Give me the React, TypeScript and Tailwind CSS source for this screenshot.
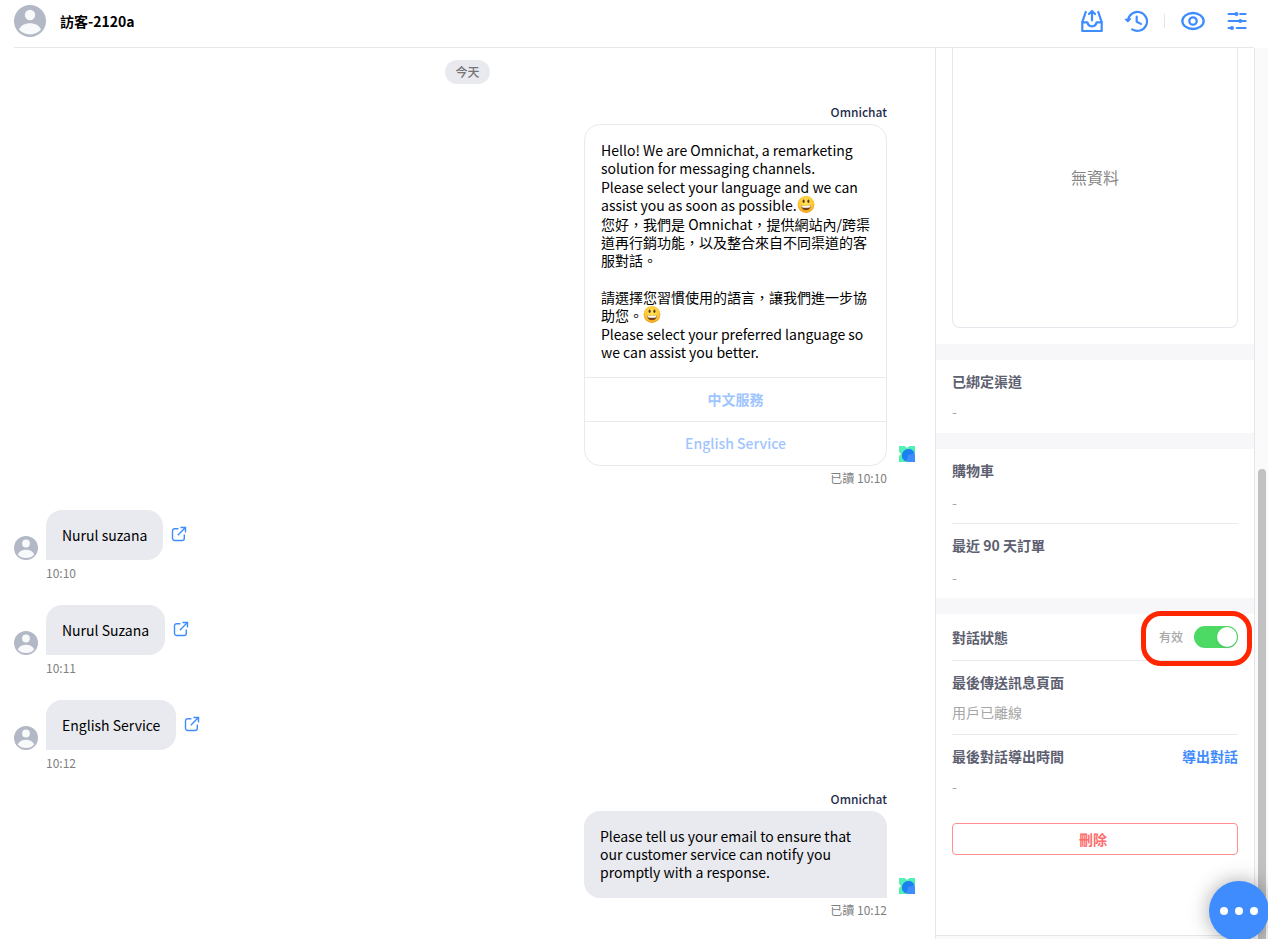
import { useState, type ReactNode } from "react";

function Avatar({ className }: { className: string }) {
  return (
    <svg viewBox="0 0 32 32" className={className} role="img" aria-label="訪客">
      <circle cx="16" cy="16" r="16" fill="#b2b8c5" />
      <circle cx="16" cy="10" r="5.2" fill="#f8f9fb" />
      <path d="M5 24.6C6.600 20.400 10.800 18.200 16 18.200s9.400 2.200 11 6.400C24.500 27.600 20.600 29.400 16 29.400S7.500 27.600 5 24.600z" fill="#f8f9fb" />
    </svg>
  );
}

function TrayIcon() {
  return (
    <svg viewBox="0 0 24 24" className="size-6" fill="none" stroke="#3f8cfe" strokeWidth="2.200" strokeLinecap="round" strokeLinejoin="round">
      <path d="M5.700 3 2.300 13.200V22h19.400v-8.800L18.300 3" />
      <path d="M2.500 13.300h4.900c.5 2.600 2.200 4 4.600 4s4.100-1.400 4.600-4h4.900" />
      <path d="M12 11.300V2.200M8.900 5 12 2l3.100 3" />
    </svg>
  );
}

function HistoryIcon() {
  return (
    <svg viewBox="0 0 24 24" className="size-6" fill="none" stroke="#3f8cfe" strokeWidth="2.200" strokeLinecap="round" strokeLinejoin="round">
      <path d="M4 11.500A9.500 9.500 0 1 1 8.200 20.300" />
      <path d="M1.300 10.300 4 12.700l2.600-2.900z" fill="#3f8cfe" strokeWidth="1.200" />
      <path d="M12.700 7.700v5l4.200 2.200" />
    </svg>
  );
}

function EyeIcon() {
  return (
    <svg viewBox="0 0 24 24" className="size-6" fill="none" stroke="#3f8cfe" strokeWidth="2.300">
      <path d="M12 4C6.400 4 1.300 7.600 1.300 12S6.400 20 12 20s10.700-3.600 10.700-8S17.600 4 12 4z" />
      <circle cx="12" cy="12" r="3.700" />
    </svg>
  );
}

function SlidersIcon() {
  return (
    <svg viewBox="0 0 24 24" className="size-6" fill="none" stroke="#3f8cfe" strokeWidth="2.200" strokeLinecap="round">
      <path d="M3.600 5h6.800M15.200 5h5.400M3.600 12h10.500M16 12h4.600M11.800 19h8.800M3.600 19h3" />
      <g fill="#3f8cfe" stroke="none">
        <circle cx="11.400" cy="5" r="2.100" />
        <circle cx="15.300" cy="12" r="2.100" />
        <circle cx="6.900" cy="19" r="2.100" />
      </g>
    </svg>
  );
}

function OpenIcon() {
  return (
    <svg viewBox="0 0 16 16" className="size-4" fill="none" stroke="#3f8cfe" strokeWidth="1.400">
      <path d="M7.400 2.700H3.700a2.200 2.200 0 0 0-2.200 2.200v7.400a2.200 2.200 0 0 0 2.200 2.200h7.400a2.200 2.200 0 0 0 2.200-2.200V8.600" />
      <path d="M6.800 9.200 14.200 1.800M9.400 1.500h5.100v5.100" />
    </svg>
  );
}

function BotMark() {
  return (
    <svg viewBox="0 0 16 16" className="size-4 shrink-0" role="img" aria-label="Omnichat">
      <path d="M0 0h4.500C6.500 0 7.500 1 8 2.500 8.500 1 9.500 0 11.500 0H16v16H0v-4.500C0 9.500 1 8.500 2.500 8 1 7.500 0 6.500 0 4.500z" fill="#52f0b5" />
      <path d="M9.500 3A6.500 6.500 0 1 0 9.500 16H16V9.500A6.500 6.500 0 0 0 9.500 3z" fill="#3f8cfe" />
      <path d="M3.200 8A6.500 6.500 0 0 1 15 6.200C13.500 8.500 11.500 8.300 9.500 8.500 8.800 10.500 9 12 6.500 15.200A6.500 6.500 0 0 1 3.200 8z" fill="#1a82f0" />
    </svg>
  );
}

function Smiley() {
  return (
    <svg viewBox="0 0 18 18" className="inline-block h-[18px] w-[18px] align-top" role="img" aria-label="😃">
      <defs>
        <radialGradient id="face" cx="50%" cy="40%" r="60%">
          <stop offset="0" stopColor="#ffe65c" />
          <stop offset="0.700" stopColor="#fdc733" />
          <stop offset="1" stopColor="#f09a1c" />
        </radialGradient>
      </defs>
      <circle cx="9" cy="8.500" r="8.400" fill="url(#face)" />
      <ellipse cx="6.600" cy="5.300" rx="1" ry="1.700" fill="#5b3411" />
      <ellipse cx="11.400" cy="5.300" rx="1" ry="1.700" fill="#5b3411" />
      <path d="M3.900 9.200c3.300.9 6.900.9 10.200 0-.2 3-2.200 5-5.100 5s-4.900-2-5.100-5z" fill="#7a4315" />
      <path d="M4.300 9.300c3.100.8 6.300.8 9.400 0l-.5 1.900c-2.700.7-5.700.7-8.400 0z" fill="#fff" />
    </svg>
  );
}

function IconButton({ label, children }: { label: string; children: ReactNode }) {
  return (
    <button type="button" aria-label={label} className="flex size-6 items-center justify-center">
      {children}
    </button>
  );
}

function VisitorMessage({ text, time }: { text: string; time: string }) {
  return (
    <article className="grid grid-cols-[24px_auto] justify-start gap-x-2 pt-1 pl-3.5">
      <Avatar className="size-6 self-end" />
      <div className="flex items-center gap-2">
        <p className="rounded-2xl rounded-bl-none bg-[#e9eaef] px-4 py-4">{text}</p>
        <a href="#open" aria-label="開啟頁面" className="pb-0.5">
          <OpenIcon />
        </a>
      </div>
      <time className="col-start-2 mt-[5px] text-xs text-[#808080]">{time}</time>
    </article>
  );
}

function BotMessage({ time, children }: { time: string; children: ReactNode }) {
  return (
    <article className="grid grid-cols-[303px_16px] justify-end gap-x-3 pr-5">
      <h2 className="mb-1 text-right text-xs font-medium text-[#1f2d4d]">Omnichat</h2>
      <div className="col-start-1">{children}</div>
      <div className="flex items-end pb-1">
        <BotMark />
      </div>
      <p className="mt-1 text-right text-xs text-[#808080]">
        已讀 <time>{time}</time>
      </p>
    </article>
  );
}

function Field({ title, action, roomy, children }: { title: string; action?: ReactNode; roomy?: boolean; children: ReactNode }) {
  return (
    <div className={roomy ? "pt-[11px] pb-[11px]" : "pt-[11px] pb-3"}>
      <div className="flex items-center justify-between">
        <h3 className="font-bold text-[#5d6070]">{title}</h3>
        {action}
      </div>
      <div className={roomy ? "mt-3 text-[#a6a6a6]" : "mt-2.5 text-[#a6a6a6]"}>{children}</div>
    </div>
  );
}

function Header() {
  return (
    <header className="mr-3.5 ml-3.5 flex h-12 shrink-0 items-center border-b border-[#e8e8ea] pb-[5px]">
      <Avatar className="size-8" />
      <h1 className="ml-3.5 text-sm font-bold">訪客-2120a</h1>
      <nav className="mr-[5px] ml-auto flex items-center gap-5">
        <IconButton label="移出對話">
          <TrayIcon />
        </IconButton>
        <IconButton label="歷史紀錄">
          <HistoryIcon />
        </IconButton>
        <div className="-mx-1 h-3.5 w-px bg-[#e4e5ea]" />
        <IconButton label="檢視">
          <EyeIcon />
        </IconButton>
        <IconButton label="設定">
          <SlidersIcon />
        </IconButton>
      </nav>
    </header>
  );
}

function Chat() {
  return (
    <main className="flex min-w-0 flex-1 flex-col gap-5 overflow-hidden pt-3 leading-[18px]">
      <p className="h-6 self-center rounded-full bg-[#e9eaef] px-2.5 text-xs leading-6 font-medium text-[#757575]">今天</p>
      <BotMessage time="10:10">
        <div className="overflow-hidden rounded-2xl border border-[#e9eaef]">
          <div className="flex flex-col gap-px p-4">
            <p>Hello! We are Omnichat, a remarketing solution for messaging channels.</p>
            <p>
              Please select your language and we can assist you as soon as possible.
              <Smiley />
            </p>
            <p>您好，我們是 Omnichat，提供網站內/跨渠道再行銷功能，以及整合來自不同渠道的客服對話。</p>
            <p className="mt-[18px]">
              請選擇您習慣使用的語言，讓我們進一步協助您。
              <Smiley />
            </p>
            <p>Please select your preferred language so we can assist you better.</p>
          </div>
          <button type="button" className="block h-11 w-full border-t border-[#e9eaef] pb-0.5 font-bold text-[#9fc5ff]">
            中文服務
          </button>
          <button type="button" className="block h-11 w-full border-t border-[#e9eaef] pb-0.5 font-medium text-[#9fc5ff]">
            English Service
          </button>
        </div>
      </BotMessage>
      <VisitorMessage text="Nurul suzana" time="10:10" />
      <VisitorMessage text="Nurul Suzana" time="10:11" />
      <VisitorMessage text="English Service" time="10:12" />
      <BotMessage time="10:12">
        <p className="rounded-2xl rounded-br-none bg-[#e9eaef] px-4 pt-4 pb-[17px]">
          Please tell us your email to ensure that our customer service can notify you promptly with a response.
        </p>
      </BotMessage>
    </main>
  );
}

function Details() {
  const [active, setActive] = useState(true);
  return (
    <aside className="flex w-[320px] shrink-0 flex-col border-x border-[#e6e6e9] leading-5">
      <div className="flex-1 overflow-hidden border-b border-[#e6e6e9]">
        <section className="px-4 pb-4">
          <div className="flex h-[280px] items-center justify-center rounded-b-lg border border-t-0 border-[#e6e6ec] pb-[22px] text-base text-[#858585]">
            無資料
          </div>
        </section>
        <section className="border-t-16 border-[#f7f7fa] px-4">
          <Field title="已綁定渠道">-</Field>
        </section>
        <section className="divide-y divide-[#e9eaef] border-t-16 border-t-[#f7f7fa] px-4">
          <Field title="購物車" roomy>
            -
          </Field>
          <Field title="最近 90 天訂單" roomy>
            -
          </Field>
        </section>
        <section className="border-t-16 border-[#f7f7fa] px-4">
          <div className="relative flex h-[47px] items-center justify-between border-b border-[#e9eaef]">
            <h3 className="font-bold text-[#5d6070]">對話狀態</h3>
            <label className="flex items-center gap-[11px] text-xs font-medium text-[#a6a6a6]">
              {active ? "有效" : "無效"}
              <input
                type="checkbox"
                role="switch"
                checked={active}
                onChange={(e) => setActive(e.target.checked)}
                className="h-[22px] w-11 appearance-none rounded-full bg-[#c4c4c4] p-px before:block before:size-5 before:rounded-full before:bg-white before:shadow checked:bg-[#4cd964] checked:before:ml-auto"
              />
            </label>
            <div className="pointer-events-none absolute -top-[3px] -right-3.5 h-[55px] w-[111px] rounded-[20px] border-5 border-[#ff2600]" />
          </div>
          <div className="divide-y divide-[#e9eaef]">
            <Field title="最後傳送訊息頁面">用戶已離線</Field>
            <Field
              title="最後對話導出時間"
              action={
                <a href="#export" className="font-bold text-[#3f8cfe]">
                  導出對話
                </a>
              }
            >
              -
            </Field>
          </div>
          <button type="button" className="mt-[15px] h-8 w-full rounded border border-[#ff8f8f] pr-1 font-bold text-[#ff6b6b]">
            刪除
          </button>
        </section>
      </div>
      <div className="h-[3px] bg-[#fafafa]" />
    </aside>
  );
}

export default function App() {
  return (
    <div className="relative flex h-screen flex-col overflow-hidden bg-white font-['Noto_Sans_CJK_TC',sans-serif] text-sm text-black">
      <Header />
      <div className="flex min-h-0 flex-1">
        <Chat />
        <Details />
        <div className="flex w-[13px] shrink-0 flex-col bg-[#fafafa] px-[3px]">
          <div className="mt-[421px] w-2 flex-1 rounded-t-full bg-[#c1c1c1]" />
        </div>
      </div>
      <button
        type="button"
        aria-label="更多"
        className="absolute -right-px -bottom-0.5 flex size-[60px] items-center justify-center gap-[7px] rounded-full bg-[#3f8cfe] shadow-[0_0_20px_rgba(0,0,0,0.35)]"
      >
        <span className="size-2 rounded-full bg-white" />
        <span className="size-2 rounded-full bg-white" />
        <span className="size-2 rounded-full bg-white" />
      </button>
    </div>
  );
}
